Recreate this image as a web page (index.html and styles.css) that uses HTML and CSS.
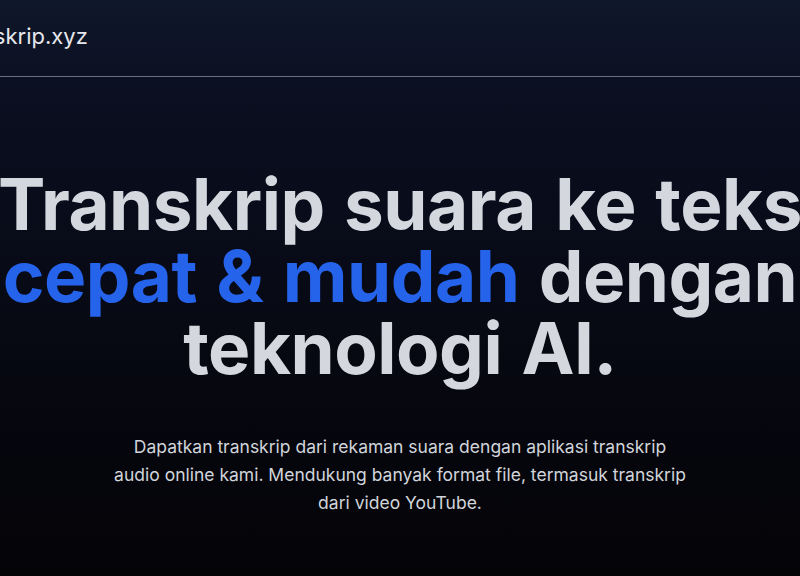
FILE: index.html
```html
<!DOCTYPE html>
<html lang="id">
<head>
<meta charset="utf-8">
<title>transkrip.xyz</title>
<link rel="stylesheet" href="styles.css">
</head>
<body>
<header class="site-header">
  <a class="logo" href="#">transkrip.xyz</a>
</header>
<main class="hero">
  <h1 class="hero-title">
    <span class="line">Transkrip suara ke teks</span>
    <span class="line"><span class="accent">cepat &amp; mudah</span> dengan</span>
    <span class="line">teknologi AI.</span>
  </h1>
  <p class="hero-text">Dapatkan transkrip dari rekaman suara dengan aplikasi transkrip audio online kami. Mendukung banyak format file, termasuk transkrip dari video YouTube.</p>
</main>
</body>
</html>
```
FILE: styles.css
```css
html, body {
  margin: 0;
  padding: 0;
}
body {
  width: 800px;
  height: 576px;
  overflow: hidden;
  background: linear-gradient(180deg, #0f172a 0%, #0a0e1f 20%, #06070f 70%, #040407 100%);
  font-family: Inter, "Noto Sans", sans-serif;
  color: #d1d5db;
}
.site-header {
  height: 76px;
  border-bottom: 1px solid #6b7080;
  display: flex;
  align-items: center;
}
.logo {
  color: #e5e7eb;
  text-decoration: none;
  font-size: 22px;
  font-weight: 400;
  margin-left: -47px;
  margin-top: -4px;
  white-space: nowrap;
}
.hero {
  display: flex;
  flex-direction: column;
  align-items: center;
  padding-top: 91px;
}
.hero-title {
  margin: 0;
  width: 800px;
  display: flex;
  flex-direction: column;
  align-items: center;
  font-size: 71px;
  line-height: 72px;
  font-weight: 700;
  letter-spacing: -0.5px;
  word-spacing: 3px;
  color: #d4d7de;
}
.hero-title .line {
  display: block;
  white-space: nowrap;
  text-align: center;
}
.hero-title .accent {
  color: #2563eb;
}
.hero-text {
  margin: 49px 0 0;
  max-width: 576px;
  text-align: center;
  font-size: 17.5px;
  line-height: 28px;
  color: #d1d5db;
}
```
